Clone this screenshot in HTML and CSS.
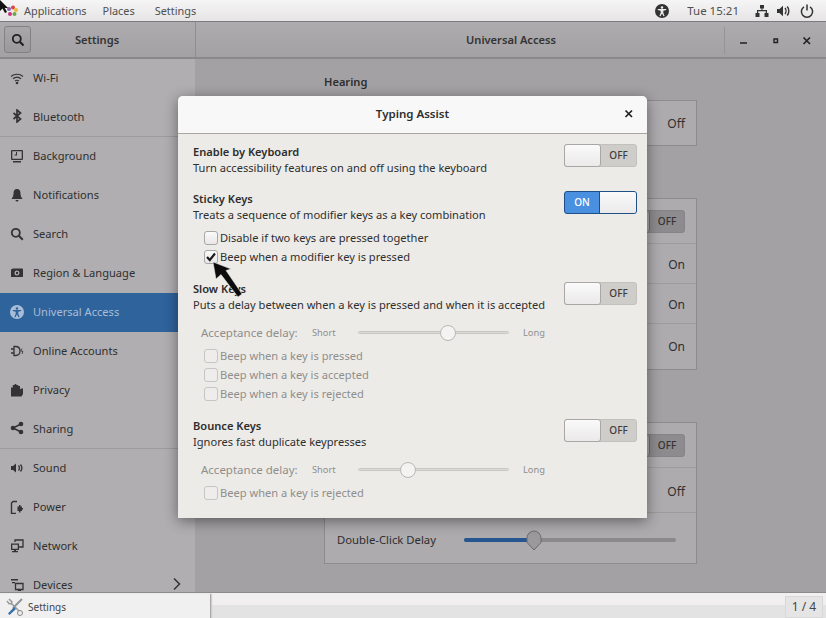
FILE: index.html
```html
<!DOCTYPE html>
<html lang="en">
<head>
    <meta charset="UTF-8">
    <meta name="viewport" content="width=device-width, initial-scale=1.0">
    <title>Settings - Universal Access</title>
    <link rel="stylesheet" href="styles.css">
</head>
<body>
    <!-- top panel -->
    <div class="topbar">
        <div class="menu">
            <svg class="logo" viewBox="0 0 12 12" width="12" height="12">
                <circle cx="3" cy="4" r="2" fill="#8a5fb0"/>
                <circle cx="7" cy="2.500" r="2" fill="#d8453f"/>
                <circle cx="10" cy="5" r="2" fill="#e9b93a"/>
                <circle cx="8.500" cy="9" r="2" fill="#6aa84f"/>
                <circle cx="4" cy="9" r="2" fill="#c8357f"/>
                <circle cx="6.500" cy="6" r="1.500" fill="#f2e8c9"/>
            </svg>
            <span class="menu-apps">Applications</span>
            <span class="menu-places">Places</span>
            <span>Settings</span>
        </div>
        <div class="status">
            <svg class="st-a11y" viewBox="0 0 14 14" width="14" height="14">
                <path fill-rule="evenodd" d="M7 0a7 7 0 1 1 0 14A7 7 0 0 1 7 0zm0 2.200a1.300 1.300 0 1 0 0 2.600 1.300 1.300 0 0 0 0-2.600zM2.800 5v1.100l2.900 .7v2L4.400 12l1.100 .3L7 9.400l1.500 2.900 1.100-.3-1.300-3.200v-2l2.900-.7V5z" fill="#333"/>
            </svg>
            <span class="clock">Tue 15:21</span>
            <svg class="st-net" viewBox="0 0 14 14" width="14" height="14">
                <path d="M5 1h4v3.500H7.500V6H12v3h1.500v4h-4V9h1.300V7.200H3.200V9h1.300v4h-4V9H2V6h4.500V4.500H5z" fill="#333"/>
            </svg>
            <svg class="st-vol" viewBox="0 0 14 14" width="14" height="14">
                <path d="M0 5h2.500L6 1.800v10.400L2.500 9H0z" fill="#333"/>
                <path d="M8 4c1.300 1.600 1.300 4.400 0 6M10.200 2.500c2.200 2.500 2.200 6.500 0 9" fill="none" stroke="#333" stroke-width="1.400"/>
            </svg>
            <svg class="st-power" viewBox="0 0 14 14" width="14" height="14">
                <path d="M4 2.800a5.600 5.600 0 1 0 6 0M7 .5v6" fill="none" stroke="#333" stroke-width="1.500"/>
            </svg>
        </div>
    </div>

    <!-- settings window, dimmed behind the dialog -->
    <div class="window">
        <div class="titlebar">
            <div class="title-left">
                <button class="search-btn">
                    <svg viewBox="0 0 14 14" width="14" height="14"><circle cx="5.800" cy="5.800" r="4" fill="none" stroke="#222" stroke-width="1.800"/><path d="M8.800 8.800l3.700 3.700" stroke="#222" stroke-width="2.200"/></svg>
                </button>
                <span class="title-left-text">Settings</span>
            </div>
            <div class="title-main">Universal Access</div>
            <div class="win-controls">
                <svg viewBox="0 0 12 12" width="12" height="12"><path d="M2 8h7" stroke="#222" stroke-width="1.500"/></svg>
                <svg viewBox="0 0 12 12" width="12" height="12"><path d="M4 4h3.500v3.500H4z" fill="none" stroke="#222" stroke-width="1.400"/></svg>
                <svg viewBox="0 0 12 12" width="12" height="12"><path d="M2.500 2.500l6.500 6.500M9 2.500L2.500 9" stroke="#222" stroke-width="1.700"/></svg>
            </div>
        </div>
        <div class="content">
            <div class="sidebar">
                <div class="side-item">
                    <svg viewBox="0 0 14 14" width="14" height="14"><path d="M1 5.500c3.500-3 8.500-3 12 0M3 7.800c2.400-2 5.600-2 8 0M5 10c1.200-.9 2.800-.9 4 0" fill="none" stroke="#333" stroke-width="1.200"/><circle cx="7" cy="12" r="1.300" fill="#333"/></svg>
                    Wi-Fi
                </div>
                <div class="side-item side-sep">
                    <svg viewBox="0 0 14 14" width="14" height="14"><path d="M3.500 4l7 6-3.500 3V1l3.500 3-7 6" fill="none" stroke="#333" stroke-width="1.700"/></svg>
                    Bluetooth
                </div>
                <div class="side-item">
                    <svg viewBox="0 0 14 14" width="14" height="14"><path fill-rule="evenodd" d="M2 1h10a1 1 0 0 1 1 1v8a1 1 0 0 1-1 1H2a1 1 0 0 1-1-1V2a1 1 0 0 1 1-1zm.300 1.300v7.400h9.400V2.300zM3 12h8v1.500H3z" fill="#333"/><path d="M7 3v3.500H4.500V5.500H6V3z" fill="#333"/></svg>
                    Background
                </div>
                <div class="side-item">
                    <svg viewBox="0 0 14 14" width="14" height="14"><path d="M7 1c2.500 0 3.500 2 3.500 4.500 0 2.500 1 4 2 5.500h-11c1-1.500 2-3 2-5.500C3.500 3 4.500 1 7 1zM5.500 12h3a1.500 1.500 0 0 1-3 0z" fill="#333"/></svg>
                    Notifications
                </div>
                <div class="side-item">
                    <svg viewBox="0 0 14 14" width="14" height="14"><circle cx="5.800" cy="5.800" r="4" fill="none" stroke="#333" stroke-width="1.800"/><path d="M8.800 8.800l4 4" stroke="#333" stroke-width="2"/></svg>
                    Search
                </div>
                <div class="side-item">
                    <svg viewBox="0 0 14 14" width="14" height="14"><path fill-rule="evenodd" d="M1 3.500l2-1h9.500l.500 1v7l-.500 .500H1zm6 1a2.500 2.500 0 1 0 0 5 2.500 2.500 0 0 0 0-5z" fill="#333"/><circle cx="7" cy="7" r="1.200" fill="#333"/></svg>
                    Region &amp; Language
                </div>
                <div class="side-item side-active">
                    <svg viewBox="0 0 14 14" width="14" height="14"><path fill-rule="evenodd" d="M7 0a7 7 0 1 1 0 14A7 7 0 0 1 7 0zm0 2.200a1.300 1.300 0 1 0 0 2.600 1.300 1.300 0 0 0 0-2.600zM2.800 5v1.100l2.900 .7v2L4.400 12l1.100 .3L7 9.400l1.500 2.900 1.100-.3-1.300-3.200v-2l2.900-.7V5z" fill="#a9bed6"/></svg>
                    Universal Access
                </div>
                <div class="side-item">
                    <svg viewBox="0 0 14 14" width="14" height="14"><path d="M4 2.500h1.500c3 0 4.500 2 4.500 4.500s-1.500 4.500-4.500 4.500H4zM1 5h3M1 9h3" fill="none" stroke="#333" stroke-width="1.300"/><path d="M12 4.500l-1 2.500 2 .500-1 2.500" fill="none" stroke="#333" stroke-width=".8"/></svg>
                    Online Accounts
                </div>
                <div class="side-item">
                    <svg viewBox="0 0 14 14" width="14" height="14"><path d="M1 4.500h1.800V2h1.900v-1h1.600v1h1.900v1H10v3.500l1-1h2V11l-1.500 2.500H1z" fill="#333"/></svg>
                    Privacy
                </div>
                <div class="side-item side-sep">
                    <svg viewBox="0 0 14 14" width="14" height="14"><path d="M11 3L3 7l8 4" fill="none" stroke="#333" stroke-width="1.500"/><circle cx="11" cy="3" r="2.300" fill="#333"/><circle cx="3" cy="7" r="2.300" fill="#333"/><circle cx="11" cy="11" r="2.300" fill="#333"/></svg>
                    Sharing
                </div>
                <div class="side-item">
                    <svg viewBox="0 0 14 14" width="14" height="14"><path d="M1 5h2l3-2.500v9L3 9H1z" fill="#333"/><path d="M8.500 4.500c1.200 1.500 1.200 3.500 0 5M10.500 3.500c1.600 2 1.600 5 0 7" fill="none" stroke="#333" stroke-width="1.300"/></svg>
                    Sound
                </div>
                <div class="side-item">
                    <svg viewBox="0 0 14 14" width="14" height="14"><path d="M7 1.500H3L1.500 3v10.500H6" fill="none" stroke="#333" stroke-width="1.400"/><path d="M7.500 6.500h1.500V5h1.500v1.500h1.500V8h1v1.500h-1V11h-1.500v1.500H9V11H7.500z" fill="#333"/></svg>
                    Power
                </div>
                <div class="side-item">
                    <svg viewBox="0 0 14 14" width="14" height="14"><path d="M5 3V1h8v7H9" fill="none" stroke="#333" stroke-width="1.300"/><path fill-rule="evenodd" d="M1 4.500h8v6.500H6v1h2v1.300H2V12h2v-1H1zm1.300 1.300v3.900h5.400V5.800z" fill="#333"/></svg>
                    Network
                </div>
                <div class="side-item side-last">
                    <svg viewBox="0 0 14 14" width="14" height="14"><path d="M1 2h7v1.500H1zM2 5h3v1.200H2z" fill="#333"/><path d="M5.500 6.500h7.500v6H5.500zM8 13.500h3" fill="none" stroke="#333" stroke-width="1.300"/></svg>
                    Devices
                    <svg class="side-chevron" viewBox="0 0 10 14" width="10" height="14"><path d="M2 1.500L7.500 7 2 12.500" fill="none" stroke="#333" stroke-width="1.500"/></svg>
                </div>
            </div>

            <div class="panel">
                <div class="panel-inner">
                    <h3 class="panel-heading">Hearing</h3>
                    <div class="box box-hearing">
                        <div class="row row-h">Off</div>
                    </div>
                    <div class="box box-typing">
                        <div class="row row-a"><span class="dim-toggle"><span class="dim-knob"></span><span class="dim-off">OFF</span></span></div>
                        <div class="row row-b">On</div>
                        <div class="row row-b">On</div>
                        <div class="row row-a">On</div>
                    </div>
                    <div class="box box-pointing">
                        <div class="row row-a"><span class="dim-toggle"><span class="dim-knob"></span><span class="dim-off">OFF</span></span></div>
                        <div class="row row-a row-low">Off</div>
                        <div class="row row-slider">
                            <span class="slider-label">Double-Click Delay</span>
                            <span class="click-track">
                                <span class="click-fill"></span>
                                <svg class="click-thumb" viewBox="0 0 18 22" width="18" height="22"><path d="M9 21L2 13.500V9a7 7 0 0 1 14 0v4.500z" fill="#9b999b" stroke="#6c6a6c"/></svg>
                            </span>
                        </div>
                    </div>
                </div>
            </div>
        </div>
    </div>

    <!-- bottom panel -->
    <div class="bottombar">
        <div class="task">
            <svg viewBox="0 0 18 18" width="18" height="18">
                <path d="M3 1l3 3-1 2-2-.5L1 3M5 5l10 10" fill="none" stroke="#9a9a9a" stroke-width="1.500"/>
                <path d="M16 1L7 10" stroke="#8f9498" stroke-width="2"/>
                <path d="M8 9l-6 6.500 1.500 1.500L10 11z" fill="#3a6ea8"/>
                <circle cx="14" cy="15" r="2.500" fill="#eee" stroke="#888"/>
            </svg>
            Settings
        </div>
        <div class="pager">1 / 4</div>
    </div>

    <!-- typing assist dialog -->
    <div class="dialog">
        <div class="dialog-head">
            Typing Assist
            <svg class="dialog-close" viewBox="0 0 12 12" width="12" height="12"><path d="M2.500 2.500l6.500 6.500M9 2.500L2.500 9" stroke="#222" stroke-width="1.700"/></svg>
        </div>
        <div class="dialog-body">
            <section class="section sec-keyboard">
                <div class="sec-top">
                    <div>
                        <div class="sec-title">Enable by Keyboard</div>
                        <div class="sec-desc">Turn accessibility features on and off using the keyboard</div>
                    </div>
                    <span class="toggle"><span class="knob"></span><span class="toggle-off">OFF</span></span>
                </div>
            </section>

            <section class="section sec-sticky">
                <div class="sec-top">
                    <div>
                        <div class="sec-title">Sticky Keys</div>
                        <div class="sec-desc">Treats a sequence of modifier keys as a key combination</div>
                    </div>
                    <span class="toggle toggle-on"><span class="toggle-on-label">ON</span><span class="knob"></span></span>
                </div>
                <div class="checks checks-sticky">
                    <label class="check"><span class="box-check"></span>Disable if two keys are pressed together</label>
                    <label class="check">
                        <span class="box-check">
                            <svg viewBox="0 0 14 14" width="14" height="14"><path d="M3 7l2.800 3L11 3.500" fill="none" stroke="#1c1c1c" stroke-width="2.200"/></svg>
                        </span>Beep when a modifier key is pressed
                    </label>
                </div>
            </section>

            <section class="section sec-slow">
                <div class="sec-top">
                    <div>
                        <div class="sec-title">Slow Keys</div>
                        <div class="sec-desc">Puts a delay between when a key is pressed and when it is accepted</div>
                    </div>
                    <span class="toggle"><span class="knob"></span><span class="toggle-off">OFF</span></span>
                </div>
                <div class="delay">
                    <span class="delay-label">Acceptance delay:</span>
                    <span class="delay-short">Short</span>
                    <span class="track"><span class="thumb thumb-slow"></span></span>
                    <span class="delay-long">Long</span>
                </div>
                <div class="checks checks-off">
                    <label class="check"><span class="box-check"></span>Beep when a key is pressed</label>
                    <label class="check"><span class="box-check"></span>Beep when a key is accepted</label>
                    <label class="check"><span class="box-check"></span>Beep when a key is rejected</label>
                </div>
            </section>

            <section class="section sec-bounce">
                <div class="sec-top">
                    <div>
                        <div class="sec-title">Bounce Keys</div>
                        <div class="sec-desc">Ignores fast duplicate keypresses</div>
                    </div>
                    <span class="toggle"><span class="knob"></span><span class="toggle-off">OFF</span></span>
                </div>
                <div class="delay">
                    <span class="delay-label">Acceptance delay:</span>
                    <span class="delay-short">Short</span>
                    <span class="track"><span class="thumb thumb-bounce"></span></span>
                    <span class="delay-long">Long</span>
                </div>
                <div class="checks checks-off">
                    <label class="check"><span class="box-check"></span>Beep when a key is rejected</label>
                </div>
            </section>
        </div>
    </div>

    <!-- mouse pointers caught in the screenshot -->
    <svg class="cursor-corner" viewBox="0 0 10 14" width="10" height="14"><path d="M0 0l0 11 2.500-2.500L5 13l2-1-2.200-4H8z" fill="#111"/></svg>
    <svg class="cursor-big" viewBox="0 0 32 38" width="32" height="38"><path d="M1 1l3 17 5-4.500L26 36l4-3L14 9.500 19 8z" fill="#0c0c0c" stroke="#eee" stroke-width=".5"/></svg>
</body>
</html>
```

FILE: styles.css
```css
* {
    box-sizing: border-box;
}

html,
body {
    margin: 0;
    height: 100%;
}

body {
    position: relative;
    width: 826px;
    height: 618px;
    overflow: hidden;
    display: flex;
    flex-direction: column;
    font-family: "Noto Sans", sans-serif;
    font-size: 11.1px;
    color: #2e2e2e;
    background-color: #a3a1a3;
}

/* top panel */
.topbar {
    height: 22px;
    flex: none;
    display: flex;
    justify-content: space-between;
    align-items: center;
    background: linear-gradient(#f6f5f5, #e6e4e4);
    border-bottom: 1px solid #7d7b7d;
    color: #505050;
    font-size: 10.9px;
}

.menu {
    display: flex;
    align-items: center;
    padding-left: 6px;
}

.logo {
    margin-top: 1px;
    margin-right: 6px;
}

.menu-apps {
    margin-right: 16px;
}

.menu-places {
    margin-right: 20px;
}

.status {
    display: flex;
    align-items: center;
    padding-right: 12px;
}

.clock {
    margin: 0 16px 0 18px;
    font-size: 11.5px;
}

.st-vol {
    margin: 0 9px 0 8px;
}

/* window */
.window {
    flex: 1;
    min-height: 0;
    display: flex;
    flex-direction: column;
}

.titlebar {
    height: 37px;
    flex: none;
    display: flex;
    background: linear-gradient(#adabad, #a3a1a3);
    border-bottom: 2px solid #8a888a;
    font-weight: 600;
}

.title-left {
    width: 196px;
    display: flex;
    align-items: center;
    padding-left: 4px;
    border-right: 1px solid #8f8d8f;
}

.search-btn {
    width: 27px;
    height: 27px;
    padding: 0;
    display: flex;
    align-items: center;
    justify-content: center;
    background: linear-gradient(#a9a7a9, #9b999b);
    border: 1px solid #838183;
    border-radius: 3px;
}

.title-left-text {
    flex: 1;
    text-align: center;
    padding-right: 32px;
    color: #333;
}

.title-main {
    flex: 1;
    text-align: center;
    line-height: 35px;
    padding-left: 102px;
    color: #333;
}

.win-controls {
    width: 102px;
    height: 27px;
    margin-top: 5px;
    display: flex;
    align-items: center;
    justify-content: space-between;
    padding: 0 13px;
    border-left: 1px solid #959395;
}

.content {
    flex: 1;
    min-height: 0;
    display: flex;
}

/* sidebar */
.sidebar {
    width: 195px;
    flex: none;
    background-color: #b1aeb1;
    overflow: hidden;
}

.side-item {
    height: 39px;
    display: flex;
    align-items: center;
    padding: 0 13px 2px 10px;
    color: #2e2e2e;
}

.side-item > svg:first-child {
    margin-right: 9px;
}

.side-sep {
    border-bottom: 1px solid #9d9b9d;
}

.side-active {
    background-color: #2f639c;
    color: #a9bed6;
}

.side-last {
    height: 34px;
    align-items: flex-start;
    padding-top: 11px;
}

.side-chevron {
    margin-left: auto;
}

/* main panel */
.panel {
    flex: 1;
    min-width: 0;
    overflow: hidden;
    background-color: #a3a1a3;
}

.panel-inner {
    margin-left: 129px;
    width: 373px;
    padding-top: 14px;
}

.panel-heading {
    margin: 0 0 9px;
    font-size: 11.1px;
    line-height: 18px;
    font-weight: 600;
    color: #2e2e2e;
}

.box {
    background-color: #aeabae;
    border: 1px solid #8d8b8d;
    font-size: 12px;
}

.box-hearing {
    margin-bottom: 52px;
}

.box-typing {
    margin-bottom: 52px;
}

.row {
    display: flex;
    align-items: center;
    justify-content: flex-end;
    padding-right: 11px;
    border-bottom: 1px solid #9d9b9d;
}

.row:last-child {
    border-bottom: none;
}

.row-h {
    height: 44px;
}

.row-a {
    height: 45px;
}

.row-b {
    height: 40px;
    padding-top: 2px;
}

.row-low {
    padding-top: 2px;
}

.dim-toggle {
    width: 73px;
    height: 23px;
    display: flex;
    background-color: #8d8b8d;
    border: 1px solid #868486;
    border-radius: 3px;
}

.dim-knob {
    width: 37px;
    border-right: 1px solid #706e70;
    background-color: #a8a6a8;
    border-radius: 3px;
}

.dim-off {
    flex: 1;
    text-align: center;
    font-size: 10px;
    font-weight: 500;
    line-height: 21px;
    color: #333;
}

.row-slider {
    height: 50px;
    justify-content: flex-start;
    padding: 4px 20px 0 12px;
}

.slider-label {
    width: 127px;
    margin-top: -2px;
    font-size: 11.3px;
}

.click-track {
    position: relative;
    flex: 1;
    height: 4px;
    border-radius: 2px;
    background-color: #8b898b;
}

.click-fill {
    display: block;
    width: 70px;
    height: 4px;
    border-radius: 2px;
    background-color: #25568f;
}

.click-thumb {
    position: absolute;
    left: 61px;
    top: -9px;
}

/* bottom panel */
.bottombar {
    height: 26px;
    flex: none;
    display: flex;
    justify-content: space-between;
    background: linear-gradient(#f1efef 50%, #e4e3e3 50%);
    border-top: 1px solid #8b8b8b;
    color: #444;
}

.task {
    width: 211px;
    display: flex;
    align-items: center;
    gap: 4px;
    padding: 1px 0 0 6px;
    margin-top: 1px;
    background-color: #f1f0f0;
    border-right: 1px solid #a9a9a9;
    box-shadow: 1px 0 1px #cfcfcf;
    font-size: 10px;
}

.pager {
    width: 38px;
    margin: 3px 3px 0 0;
    text-align: center;
    line-height: 20px;
    background-color: #e6e5e5;
    border: 1px solid #d8d8d8;
    font-size: 12px;
}

/* dialog */
.dialog {
    position: absolute;
    left: 178px;
    top: 96px;
    width: 469px;
    height: 422px;
    background-color: #edebe7;
    border-radius: 5px 5px 0 0;
    box-shadow: 0 3px 14px rgba(0, 0, 0, 0.45);
}

.dialog-head {
    position: relative;
    height: 38px;
    line-height: 36px;
    text-align: center;
    font-size: 11.5px;
    font-weight: 600;
    color: #2e2e2e;
    background: #f8f8f8;
    border-bottom: 1px solid #a8a6a3;
    border-radius: 5px 5px 0 0;
}

.dialog-close {
    position: absolute;
    right: 12px;
    top: 12px;
}

.dialog-body {
    padding: 10px 10px 0 15px;
}

.section {
    margin-bottom: 15px;
}

.sec-top {
    display: flex;
    justify-content: space-between;
    align-items: flex-start;
}

.sec-title {
    line-height: 16px;
    font-weight: 600;
    color: #2e2e2e;
}

.sec-desc {
    line-height: 16px;
    color: #2e2e2e;
}

/* switches */
.toggle {
    width: 73px;
    height: 23px;
    flex: none;
    display: flex;
    background-color: #cfcdca;
    border: 1px solid #c3c1be;
    border-radius: 3px;
}

.sec-slow .toggle,
.sec-bounce .toggle {
    margin-top: 1px;
}

.knob {
    width: 37px;
    background: linear-gradient(#fafafa, #ebe9e9);
    border: 1px solid #a9a7a5;
    border-radius: 3px;
    margin: -1px 0 -1px -1px;
}

.toggle-off {
    flex: 1;
    text-align: center;
    font-size: 10px;
    font-weight: 500;
    line-height: 21px;
    color: #3c3c3c;
}

.toggle-on {
    background-color: #4a90e0;
    border-color: #1f4f85;
}

.toggle-on .knob {
    margin: 0;
    border: none;
    border-left: 1px solid #1f4f85;
    border-radius: 0 2px 2px 0;
}

.toggle-on-label {
    flex: 1;
    text-align: center;
    font-size: 10px;
    font-weight: 500;
    line-height: 21px;
    color: #fff;
}

/* check boxes */
.checks {
    display: flex;
    flex-direction: column;
    padding-left: 11px;
}

.checks-sticky {
    margin-top: 5px;
}

.checks-off {
    color: #8f8e8c;
}

.checks-off .box-check {
    background: #efedec;
    border-color: #c7c5c3;
}

.check {
    height: 19px;
    display: flex;
    align-items: center;
}

.box-check {
    width: 14px;
    height: 14px;
    margin-right: 2px;
    flex: none;
    background: linear-gradient(#fafafa, #e9e7e7);
    border: 1px solid #a9a7a5;
    border-radius: 3px;
    display: block;
}

.box-check svg {
    display: block;
    margin: -1px;
}

/* acceptance delay */
.delay {
    display: flex;
    align-items: center;
    height: 20px;
    margin: 9px 0 4px;
    padding-left: 8px;
    color: #8f8e8c;
}

.delay-label {
    width: 111px;
    font-size: 11.5px;
}

.delay-short {
    width: 46px;
    font-size: 9.3px;
}

.delay-long {
    margin-left: 14px;
    font-size: 9.3px;
}

.track {
    position: relative;
    width: 151px;
    height: 3px;
    background-color: #dcdad7;
    border: 1px solid #c9c7c4;
    border-radius: 2px;
}

.thumb {
    position: absolute;
    top: -7px;
    width: 16px;
    height: 16px;
    border-radius: 50%;
    background-color: #f4f3f2;
    border: 1px solid #b9b7b4;
}

.thumb-slow {
    left: 81px;
}

.thumb-bounce {
    left: 41px;
}

/* pointers */
.cursor-corner {
    position: absolute;
    left: 0;
    top: 0;
}

.cursor-big {
    position: absolute;
    left: 212px;
    top: 261px;
}
```
